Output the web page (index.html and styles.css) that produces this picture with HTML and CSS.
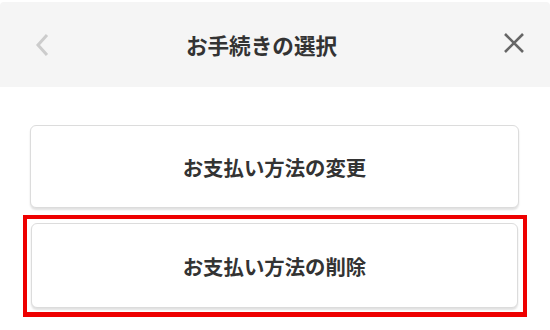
FILE: index.html
```html
<!DOCTYPE html>
<html lang="ja">
<head>
<meta charset="utf-8">
<link rel="stylesheet" href="styles.css">
</head>
<body>
<header class="header">
  <span class="back">
    <svg width="14" height="24" viewBox="0 0 14 24"><path d="M12 2 L3 12 L12 22" fill="none" stroke="#cccccc" stroke-width="3"/></svg>
  </span>
  <h1 class="title">お手続きの選択</h1>
  <span class="close">
    <svg width="20" height="20" viewBox="0 0 20 20"><path d="M1 1 L19 19 M19 1 L1 19" fill="none" stroke="#666666" stroke-width="2.6"/></svg>
  </span>
</header>
<main class="menu">
  <div class="item">お支払い方法の変更</div>
  <div class="highlight">
    <div class="item item-tall">お支払い方法の削除</div>
  </div>
</main>
</body>
</html>
```
FILE: styles.css
```css
html, body {
  margin: 0;
  padding: 0;
  background: #ffffff;
  font-family: "Noto Sans CJK JP", "Noto Sans", sans-serif;
  color: #333333;
}
.header {
  margin-top: 2px;
  height: 85px;
  background: #f5f5f5;
  border-radius: 4px 4px 0 0;
  display: flex;
  align-items: center;
  padding: 0 26px 0 35px;
}
.back {
  display: flex;
  width: 14px;
  margin-top: 1px;
}
.title {
  flex: 1;
  margin: 0;
  padding-right: 30px;
  text-align: center;
  font-size: 21.6px;
  font-weight: bold;
  color: #333333;
  line-height: 1;
  margin-top: 1px;
}
.close {
  display: flex;
  margin-top: -4px;
}
.menu {
  padding: 38px 0 0 30px;
  width: 489px;
}
.item {
  height: 81px;
  border: 1px solid #dcdcdc;
  border-radius: 6px;
  box-shadow: 0 2px 2px rgba(0, 0, 0, 0.12);
  background: #ffffff;
  display: flex;
  align-items: center;
  justify-content: center;
  font-size: 20.4px;
  font-weight: bold;
  color: #333333;
}
.item-tall {
  height: 83px;
}
.highlight {
  margin: 7px -8px 0 -7px;
  border: 4px solid #ee0000;
  border-bottom-width: 5px;
  padding: 4px 5px 4px 4px;
}
```
